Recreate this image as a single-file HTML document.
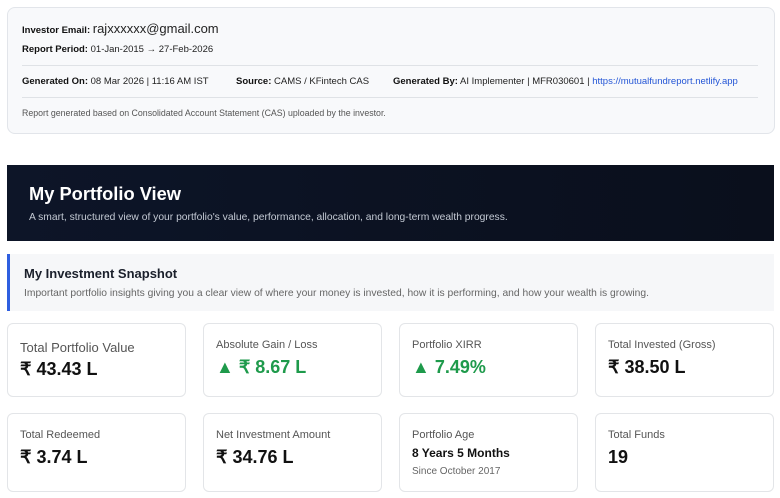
<!DOCTYPE html><html><head><style>
body{margin:0;width:780px;height:498px;background:#fff;font-family:"Liberation Sans",sans-serif;color:#111;position:relative;overflow:hidden}
.a{position:absolute}
.hdr{left:7px;top:7px;width:766px;height:125px;background:#f8f9fb;border:1px solid #e2e5ea;border-radius:8px}
.t{font-size:9.5px;color:#222;white-space:nowrap}
.t b{color:#111}
.ln{height:1px;background:#dfe2e6;left:14px;width:744px}
.ban{left:7px;top:165px;width:767px;height:76px;background:linear-gradient(90deg,#0d1528,#0a0f1c)}
.snap{left:7px;top:254px;width:767px;height:57px;background:#f6f7f9;border-left:3px solid #2f5fe0;box-sizing:border-box}
.c{width:179px;border:1px solid #e3e5e8;border-radius:6px;box-sizing:border-box;background:#fff}
.c .l{position:absolute;left:12px;top:15px;font-size:11px;color:#555}
.c .v{position:absolute;left:12px;top:33px;font-size:18px;font-weight:bold;color:#111}
.g{color:#1e9a4b!important}
</style></head><body>
<div class="a hdr"></div>
<div class="a t" style="left:22px;top:21px"><b>Investor Email:</b> <span style="font-size:13px;color:#222">rajxxxxxx@gmail.com</span></div>
<div class="a t" style="left:22px;top:44px"><b>Report Period:</b> 01-Jan-2015 → 27-Feb-2026</div>
<div class="a ln" style="top:65px;left:22px;width:736px"></div>
<div class="a t" style="left:22px;top:76px"><b>Generated On:</b> 08 Mar 2026 | 11:16 AM IST</div>
<div class="a t" style="left:236px;top:76px"><b>Source:</b> CAMS / KFintech CAS</div>
<div class="a t" style="left:393px;top:76px"><b>Generated By:</b> AI Implementer | MFR030601 | <span style="color:#2456d6">https://mutualfundreport.netlify.app</span></div>
<div class="a ln" style="top:97px;left:22px;width:736px"></div>
<div class="a t" style="left:22px;top:108px;font-size:8.8px;color:#555">Report generated based on Consolidated Account Statement (CAS) uploaded by the investor.</div>
<div class="a ban"></div>
<div class="a" style="left:29px;top:183px;font-size:18.3px;font-weight:bold;color:#fff">My Portfolio View</div>
<div class="a" style="left:29px;top:212px;font-size:10.3px;color:#c4cad4">A smart, structured view of your portfolio's value, performance, allocation, and long-term wealth progress.</div>
<div class="a snap"></div>
<div class="a" style="left:24px;top:266px;font-size:13px;font-weight:bold;color:#1a1f2b">My Investment Snapshot</div>
<div class="a" style="left:24px;top:288px;font-size:10.3px;color:#666">Important portfolio insights giving you a clear view of where your money is invested, how it is performing, and how your wealth is growing.</div>

<div class="a c" style="left:7px;top:323px;height:74px"><div class="l" style="font-size:13px;top:16px">Total Portfolio Value</div><div class="v" style="top:35px">₹ 43.43 L</div></div>
<div class="a c" style="left:203px;top:323px;height:74px"><div class="l">Absolute Gain / Loss</div><div class="v g">▲ ₹ 8.67 L</div></div>
<div class="a c" style="left:399px;top:323px;height:74px"><div class="l">Portfolio XIRR</div><div class="v g">▲ 7.49%</div></div>
<div class="a c" style="left:595px;top:323px;height:74px"><div class="l">Total Invested (Gross)</div><div class="v">₹ 38.50 L</div></div>

<div class="a c" style="left:7px;top:413px;height:79px"><div class="l">Total Redeemed</div><div class="v">₹ 3.74 L</div></div>
<div class="a c" style="left:203px;top:413px;height:79px"><div class="l">Net Investment Amount</div><div class="v">₹ 34.76 L</div></div>
<div class="a c" style="left:399px;top:413px;height:79px"><div class="l">Portfolio Age</div><div class="v" style="font-size:12px;top:32px">8 Years 5 Months</div><div class="a" style="left:12px;top:52px;font-size:10px;color:#666">Since October 2017</div></div>
<div class="a c" style="left:595px;top:413px;height:79px"><div class="l">Total Funds</div><div class="v">19</div></div>
</body></html>
